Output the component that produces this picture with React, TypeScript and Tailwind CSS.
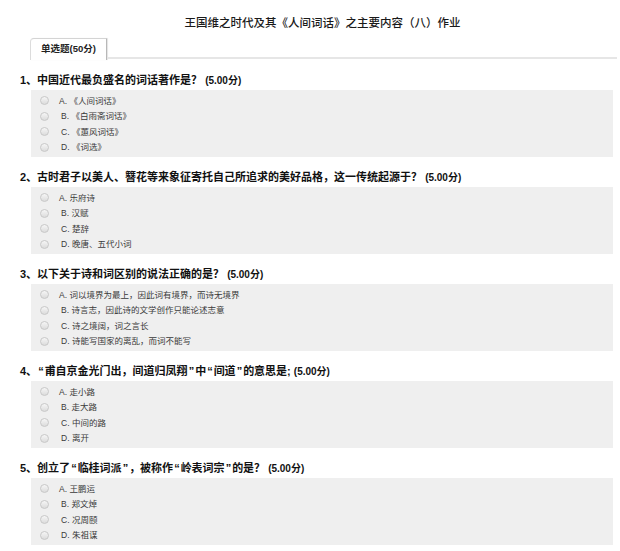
import React from "react";

type Q = { title: string; options: string[] };

const questions: Q[] = [
  {
    title: "1、中国近代最负盛名的词话著作是？",
    options: ["《人间词话》", "《白雨斋词话》", "《蕙风词话》", "《词选》"],
  },
  {
    title: "2、古时君子以美人、簪花等来象征寄托自己所追求的美好品格，这一传统起源于？",
    options: ["乐府诗", "汉赋", "楚辞", "晚唐、五代小词"],
  },
  {
    title: "3、以下关于诗和词区别的说法正确的是？",
    options: [
      "词以境界为最上，因此词有境界，而诗无境界",
      "诗言志，因此诗的文学创作只能论述志意",
      "诗之境阔，词之言长",
      "诗能写国家的离乱，而词不能写",
    ],
  },
  {
    title: "4、“甫自京金光门出，间道归凤翔”中“间道”的意思是;",
    options: ["走小路", "走大路", "中间的路", "离开"],
  },
  {
    title: "5、创立了“临桂词派”，被称作“岭表词宗”的是？",
    options: ["王鹏运", "郑文焯", "况周颐", "朱祖谋"],
  },
];

const letters = ["A", "B", "C", "D"];

function Radio() {
  return (
    <span className="inline-block w-[9px] h-[9px] rounded-full border border-[#c8c8c8] bg-gradient-to-b from-[#f6f6f6] to-[#dcdcdc] shrink-0" />
  );
}

function Title({ text }: { text: string }) {
  const parts = text.split(/([“”])/);
  return (
    <>
      {parts.map((p, i) =>
        p === "“" || p === "”" ? (
          <span key={i} className="px-[1px]">
            {p}
          </span>
        ) : (
          <React.Fragment key={i}>{p}</React.Fragment>
        )
      )}
    </>
  );
}

export default function App() {
  return (
    <div
      className="w-[620px] h-[551px] bg-white overflow-hidden"
      style={{ fontFamily: '"Liberation Sans", "Noto Sans CJK SC", sans-serif' }}
    >
      <div className="pt-[12px] pl-[25px]">
        <div
          className="h-[20px] leading-[20px] text-center text-[11.5px] font-medium text-[#1a1a1a]"
          style={{ fontFamily: '"Noto Sans CJK SC", sans-serif' }}
        >
          王国维之时代及其《人间词话》之主要内容（八）作业
        </div>
      </div>

      <div className="mt-[6px] flex items-end pl-[30px] pr-[3px]">
        <div className="h-[22px] w-[77px] border-l border-t border-r border-l-[#dcdcdc] border-t-[#d4d4d4] border-r-[#b8b8b8] rounded-tl-[4px] bg-white flex items-center justify-center text-[9.5px] font-bold text-[#222] shadow-[1px_0_1px_#e4e4e4]">
          单选题(50分)
        </div>
        <div className="flex-1 h-[2px] bg-[#e6e6e6] mb-[1px]" />
      </div>

      <div className="mt-[10px]">
        {questions.map((q, qi) => (
          <div key={qi} className="mb-[10px]">
            <div className="h-[20px] leading-[20px] pl-[20px] text-[11px] font-bold text-[#111] whitespace-nowrap">
              <Title text={q.title} />
              <span className="ml-[3px] text-[10px]">(5.00分)</span>
            </div>
            <div className="ml-[31px] w-[582px] h-[67px] bg-[#efefef] pt-[3px]">
              {q.options.map((o, oi) => (
                <div key={oi} className="h-[15.5px] flex items-center pl-[9px]">
                  <Radio />
                  <span
                    className={
                      "text-[8.5px] text-[#3a3a3a] whitespace-nowrap " +
                      (oi === 0 ? "ml-[10px]" : "ml-[12px]")
                    }
                  >
                    {letters[oi]}.&nbsp;
                    <span style={{ fontFamily: '"Noto Sans CJK SC", sans-serif' }}>{o}</span>
                  </span>
                </div>
              ))}
            </div>
          </div>
        ))}
      </div>
    </div>
  );
}
